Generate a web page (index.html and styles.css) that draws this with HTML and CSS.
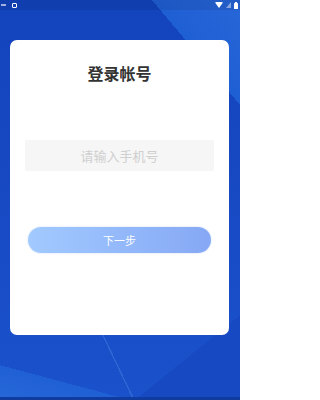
FILE: index.html
```html
<!DOCTYPE html>
<html lang="zh">
<head>
<meta charset="utf-8">
<link rel="stylesheet" href="styles.css">
</head>
<body>
<div class="screen">
  <div class="statusbar">
    <div class="sb-left">
      <span class="sb-dash"></span>
      <span class="sb-box"></span>
    </div>
    <div class="sb-right">
      <svg width="8" height="6" viewBox="0 0 8 6"><path d="M0 0.5 Q4 -1 8 0.5 L4 6 Z" fill="#fff"/></svg>
      <svg width="5" height="6" viewBox="0 0 5 6"><path d="M5 0 L5 6 L0 6 Z" fill="#fff" opacity="0.45"/></svg>
      <svg width="4" height="7" viewBox="0 0 4 7"><rect x="1" y="0" width="2" height="1" fill="#fff"/><rect x="0" y="1" width="4" height="6" rx="0.5" fill="#fff"/></svg>
    </div>
  </div>
  <div class="card">
    <h1 class="title">登录帐号</h1>
    <div class="input">请输入手机号</div>
    <div class="btn">下一步</div>
  </div>
  <div class="navline"></div>
</div>
</body>
</html>
```
FILE: styles.css
```css
* { box-sizing: border-box; }
html, body { margin: 0; padding: 0; }
body {
  font-family: "Noto Sans CJK SC", "Noto Sans", sans-serif;
  width: 240px;
  height: 400px;
  overflow: hidden;
}
.screen {
  width: 240px;
  height: 400px;
  background-color: #1749c4;
  background-image:
    linear-gradient(64.5deg, transparent 49.1%, rgba(120,170,245,0.22) 49.1%, rgba(120,170,245,0.22) 49.7%, transparent 49.7%),
    linear-gradient(50deg, transparent 84.7%, #1f5fd4 84.7%, #2766d8 100%),
    linear-gradient(195deg, transparent 92.5%, #2060d5 92.5%, #2667d9 100%),
    linear-gradient(141deg, transparent 85.7%, #1649c2 85.7%),
    linear-gradient(180deg, #1344bd 0%, #1748c2 40%, #1a52cc 100%);
  background-size: 240px 65px, 100% 100%, 100% 100%, 100% 100%, 100% 100%;
  background-position: 0 335px, 0 0, 0 0, 0 0, 0 0;
  background-repeat: no-repeat;
  display: flex;
  flex-direction: column;
}
.statusbar {
  height: 10px;
  flex: none;
  display: flex;
  justify-content: space-between;
  align-items: center;
  padding: 0 2px 0 1px;
  background: rgba(0,0,0,0.08);
}
.sb-left { display: flex; align-items: center; gap: 6px; }
.sb-dash { width: 5px; height: 2px; background: rgba(255,255,255,0.6); }
.sb-box { width: 5px; height: 5px; border: 1px solid #fff; border-radius: 1px; }
.sb-right { display: flex; align-items: center; gap: 3px; }
.card {
  flex: none;
  margin: 30px 11px 0 10px;
  height: 295px;
  background: #fff;
  border-radius: 7px;
  padding-top: 24px;
  display: flex;
  flex-direction: column;
}
.title {
  margin: 0;
  font-size: 16px;
  line-height: 18px;
  font-weight: 700;
  color: #333;
  text-align: center;
}
.input {
  margin: 58px 15px 0 15px;
  height: 31px;
  background: #f6f6f6;
  border-radius: 2px;
  color: #cfcfcf;
  font-size: 13px;
  display: flex;
  align-items: center;
  justify-content: center;
}
.btn {
  margin: 56px 18px 0 18px;
  height: 26px;
  border-radius: 13px;
  background: linear-gradient(90deg, #a2caff 0%, #86a8f5 100%);
  box-shadow: 0 0 2px rgba(120,160,240,0.4);
  color: #fff;
  font-size: 11px;
  display: flex;
  align-items: center;
  justify-content: center;
}
.navline {
  margin-top: auto;
  height: 3px;
  flex: none;
  background: #0f3c9e;
}
```
